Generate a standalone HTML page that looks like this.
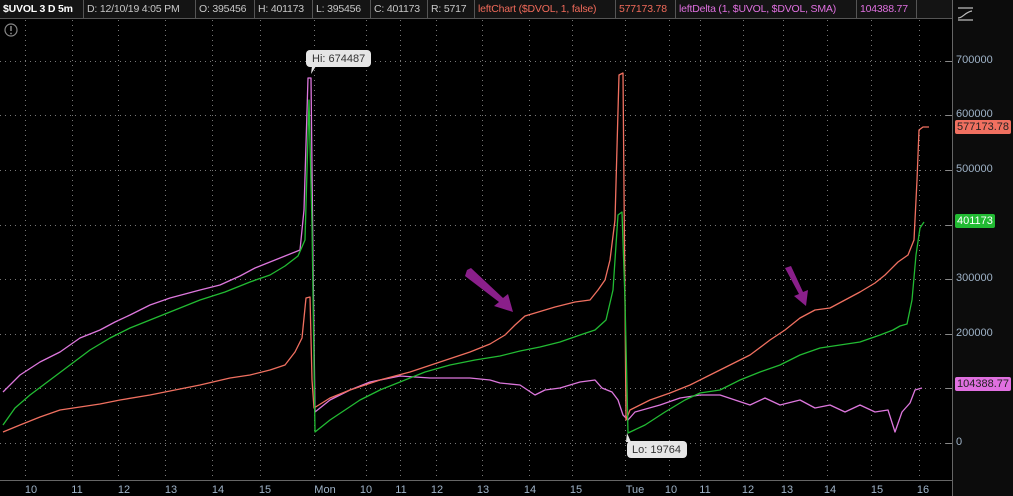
<!DOCTYPE html>
<html><head><meta charset="utf-8"><style>
*{margin:0;padding:0;box-sizing:border-box}
body{width:1013px;height:496px;background:#000;overflow:hidden;font-family:"Liberation Sans",sans-serif;position:relative}
#hdr{position:absolute;left:0;top:0;width:952px;height:19px;background:#141414;border-bottom:1px solid #555}
.c{position:absolute;top:0;height:19px;line-height:19px;font-size:10.5px;letter-spacing:-0.2px;color:#c8c8c8;padding-left:3px;border-right:1px solid #555;white-space:nowrap;overflow:hidden}
#rp{position:absolute;left:952px;top:0;width:61px;height:496px;background:#0c0c0c;border-left:1px solid #666}
.yl{position:absolute;left:956px;font-size:11px;color:#9fb3c8}
.xl{position:absolute;top:484px;font-size:11px;color:#9fb3c8;transform:translateX(-50%)}
.tag{position:absolute;left:955px;font-size:11px;padding:0 2px;height:14px;line-height:14px;border-radius:2px}
</style></head><body>
<div id="hdr">
<div class="c" style="left:0;width:84px;font-weight:bold;color:#fff">$UVOL 3 D 5m</div>
<div class="c" style="left:84px;width:112px">D: 12/10/19 4:05 PM</div>
<div class="c" style="left:196px;width:59px">O: 395456</div>
<div class="c" style="left:255px;width:58px">H: 401173</div>
<div class="c" style="left:313px;width:58px">L: 395456</div>
<div class="c" style="left:371px;width:57px">C: 401173</div>
<div class="c" style="left:428px;width:47px">R: 5717</div>
<div class="c" style="left:475px;width:141px;color:#f06a5a">leftChart ($DVOL, 1, false)</div>
<div class="c" style="left:616px;width:60px;color:#f06a5a">577173.78</div>
<div class="c" style="left:676px;width:181px;color:#e070e0">leftDelta (1, $UVOL, $DVOL, SMA)</div>
<div class="c" style="left:857px;width:60px;color:#e070e0">104388.77</div>
</div>
<div id="rp"></div>
<svg width="1013" height="496" style="position:absolute;left:0;top:0">
<g stroke="#777" stroke-dasharray="1,4" stroke-width="1">
<line x1="0" y1="61.5" x2="951" y2="61.5"/><line x1="0" y1="115.5" x2="951" y2="115.5"/><line x1="0" y1="170.5" x2="951" y2="170.5"/><line x1="0" y1="225.5" x2="951" y2="225.5"/><line x1="0" y1="279.5" x2="951" y2="279.5"/><line x1="0" y1="334.5" x2="951" y2="334.5"/><line x1="0" y1="388.5" x2="951" y2="388.5"/><line x1="0" y1="443.5" x2="951" y2="443.5"/>
<line x1="25.5" y1="20" x2="25.5" y2="480"/><line x1="72.5" y1="20" x2="72.5" y2="480"/><line x1="118.5" y1="20" x2="118.5" y2="480"/><line x1="165.5" y1="20" x2="165.5" y2="480"/><line x1="212.5" y1="20" x2="212.5" y2="480"/><line x1="260.5" y1="20" x2="260.5" y2="480"/><line x1="314.5" y1="20" x2="314.5" y2="480"/><line x1="366.5" y1="20" x2="366.5" y2="480"/><line x1="400.5" y1="20" x2="400.5" y2="480"/><line x1="436.5" y1="20" x2="436.5" y2="480"/><line x1="482.5" y1="20" x2="482.5" y2="480"/><line x1="529.5" y1="20" x2="529.5" y2="480"/><line x1="572.5" y1="20" x2="572.5" y2="480"/><line x1="625.5" y1="20" x2="625.5" y2="480"/><line x1="669.5" y1="20" x2="669.5" y2="480"/><line x1="700.5" y1="20" x2="700.5" y2="480"/><line x1="743.5" y1="20" x2="743.5" y2="480"/><line x1="783.5" y1="20" x2="783.5" y2="480"/><line x1="827.5" y1="20" x2="827.5" y2="480"/><line x1="871.5" y1="20" x2="871.5" y2="480"/><line x1="919.5" y1="20" x2="919.5" y2="480"/>
</g>
<line x1="0" y1="480.5" x2="952" y2="480.5" stroke="#666"/>
<g stroke="#888"><line x1="946" y1="61.5" x2="952" y2="61.5"/><line x1="946" y1="115.5" x2="952" y2="115.5"/><line x1="946" y1="170.5" x2="952" y2="170.5"/><line x1="946" y1="225.5" x2="952" y2="225.5"/><line x1="946" y1="279.5" x2="952" y2="279.5"/><line x1="946" y1="334.5" x2="952" y2="334.5"/><line x1="946" y1="388.5" x2="952" y2="388.5"/><line x1="946" y1="443.5" x2="952" y2="443.5"/></g>
<circle cx="11" cy="30" r="6" fill="none" stroke="#888" stroke-width="1.2"/><line x1="11" y1="26" x2="11" y2="31" stroke="#888" stroke-width="1.5"/><circle cx="11" cy="33.5" r="0.9" fill="#888"/>
<g fill="none" stroke-width="1.3" stroke-linejoin="round">
<polyline stroke="#dd77dd" points="3,392 20,375 40,362 60,352 80,338 100,330 115,322 130,315 150,305 170,298 200,290 220,285 240,276 255,268 270,262 285,256 300,250 304,210 308,78 311,78 313,260 315,412 330,400 350,390 370,382 400,376 430,378 450,378 470,378 490,380 500,383 520,385 535,395 545,390 560,388 580,382 595,380 602,388 612,392 618,400 623,415 628,420 635,412 660,405 680,398 700,395 720,395 735,400 750,405 765,398 780,405 800,400 815,408 830,405 845,412 860,405 875,412 888,410 895,432 902,412 910,403 915,390 922,388"/>
<polyline stroke="#f07060" points="3,432 20,425 40,417 60,410 80,407 100,404 120,400 150,395 175,390 200,385 230,378 250,375 270,370 285,365 295,352 302,338 306,298 310,297 312,380 314,408 330,398 350,390 380,380 410,372 440,362 470,352 490,344 505,335 515,325 525,316 535,313 555,307 575,302 590,300 598,290 605,280 610,260 615,220 619,75 623,73 626,420 630,410 650,400 670,393 690,385 710,375 730,365 750,355 770,340 785,330 800,318 815,310 830,308 845,300 860,292 875,283 885,275 898,262 908,255 914,240 917,180 919,130 923,127 929,127"/>
<polyline stroke="#22bb33" points="3,425 15,408 30,395 50,380 70,365 90,350 110,338 130,328 150,320 175,310 200,300 225,292 250,282 270,275 285,266 298,256 305,240 309,100 312,225 315,432 330,420 345,410 360,400 380,390 400,382 425,372 450,365 475,360 500,356 520,351 540,347 560,342 580,335 595,330 606,320 613,290 618,215 622,212 625,300 628,433 645,425 665,412 685,400 700,393 720,390 740,380 760,372 780,365 800,355 820,348 840,345 860,342 880,335 893,330 900,326 907,324 912,300 916,255 920,228 924,222"/>
</g>
<g fill="#8a1f8a">
<path d="M467,270 L471,268 L503,298 L508,294 L513,312 L494,306 L499,302 L465,276 Z"/>
<path d="M785,268 L791,266 L803,292 L808,290 L806,306 L794,296 L799,294 Z"/>
</g>
<rect x="306" y="50" width="65" height="17" rx="4" fill="#e6e6e6"/>
<path d="M312,66 L316,66 L311,74 Z" fill="#e6e6e6"/>
<text x="312" y="62" font-size="11" fill="#333" font-family="Liberation Sans">Hi: 674487</text>
<path d="M626,442 L631,442 L627,433 Z" fill="#e6e6e6"/>
<rect x="627" y="441" width="60" height="17" rx="4" fill="#e6e6e6"/>
<text x="632" y="453" font-size="11" fill="#333" font-family="Liberation Sans">Lo: 19764</text>
<path d="M958,8 L973,8 M958,20 L973,20 M958,18 C963,18 965,12 972,11" stroke="#bbb" fill="none" stroke-width="1.2"/>
</svg>
<div class="yl" style="top:54px">700000</div>
<div class="yl" style="top:108px">600000</div>
<div class="yl" style="top:163px">500000</div>
<div class="yl" style="top:272px">300000</div>
<div class="yl" style="top:327px">200000</div>
<div class="yl" style="top:436px">0</div>
<div class="tag" style="top:120px;background:#f07060;color:#222">577173.78</div>
<div class="tag" style="top:214px;background:#22bb33;color:#fff">401173</div>
<div class="tag" style="top:377px;background:#e070e0;color:#222">104388.77</div>
<div class="xl" style="left:31px">10</div><div class="xl" style="left:77px">11</div><div class="xl" style="left:124px">12</div><div class="xl" style="left:171px">13</div><div class="xl" style="left:218px">14</div><div class="xl" style="left:265px">15</div><div class="xl" style="left:325px">Mon</div><div class="xl" style="left:366px">10</div><div class="xl" style="left:401px">11</div><div class="xl" style="left:437px">12</div><div class="xl" style="left:483px">13</div><div class="xl" style="left:530px">14</div><div class="xl" style="left:576px">15</div><div class="xl" style="left:635px">Tue</div><div class="xl" style="left:671px">10</div><div class="xl" style="left:705px">11</div><div class="xl" style="left:748px">12</div><div class="xl" style="left:787px">13</div><div class="xl" style="left:830px">14</div><div class="xl" style="left:877px">15</div><div class="xl" style="left:923px">16</div>
</body></html>
